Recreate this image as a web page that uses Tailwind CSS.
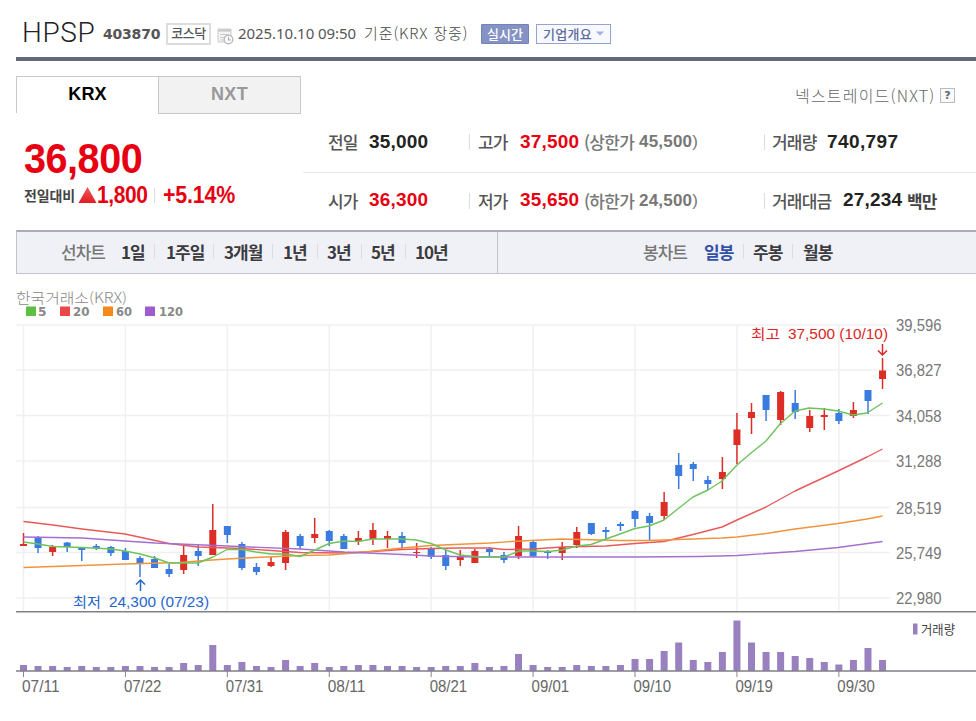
<!DOCTYPE html>
<html lang="ko">
<head>
  <meta charset="UTF-8">
  <meta name="viewport" content="width=device-width, initial-scale=1.0">
  <title>HPSP 403870</title>
  <script src="https://cdn.jsdelivr.net/npm/@tailwindcss/browser@4"></script>
</head>
<body class="w-[976px] h-[721px] overflow-hidden bg-white font-['Liberation_Sans','Noto_Sans_CJK_KR',sans-serif] whitespace-nowrap">
  <!-- Stock title -->
  <header class="ml-4 h-[61px] border-b-4 border-[#646a75] flex items-center pl-[6px] pt-[10px]">
    <h1 class="w-[81px] pb-[2px] text-[28px] leading-7 font-light text-[#222] tracking-[0.6px] font-['Roboto',sans-serif]">HPSP</h1>
    <span class="w-[63px] text-[14px] font-bold text-[#555] font-['DejaVu_Sans',sans-serif] tracking-[-0.2px] pt-0.5">403870</span>
    <span class="w-[45px] h-[22px] border-2 border-[#ddd] text-[13px] leading-[16px] text-center font-medium text-[#555] tracking-[-0.5px] font-['Noto_Sans_CJK_KR',sans-serif]">코스닥</span>
    <svg class="ml-[6px] mt-[5px] w-[17px] h-[17px]" viewBox="0 0 17 17" fill="none">
      <path d="M1 1h13v13H1z" fill="#f4f4f4" stroke="#ccc"/>
      <path d="M1 2.5h13" stroke="#c4c4c4" stroke-width="2"/>
      <path d="M3 6.5h9M3 9.5h5M3 12h4" stroke="#ccc"/>
      <circle cx="11.5" cy="11.5" r="4.3" fill="#fff" stroke="#bbb" stroke-width="1.4"/>
      <path d="M11.5 9v3H14" stroke="#aaa" stroke-width="1.2"/>
    </svg>
    <span class="ml-1 w-[126px] text-[15px] text-[#555] font-['Noto_Sans',sans-serif] tracking-[-0.05px]">2025.10.10 09:50</span>
    <span class="w-[117px] text-[15px] font-light text-[#444] font-['Noto_Sans_CJK_KR',sans-serif] tracking-[0.9px]">기준(KRX 장중)</span>
    <span class="w-[48px] h-5 bg-[#8493c4] border border-[#7283b8] rounded-[1px] text-[13px] leading-[17px] text-center font-medium text-white font-['Noto_Sans_CJK_KR',sans-serif]">실시간</span>
    <span class="ml-[7px] w-[75px] h-5 border border-[#96a3cf] bg-[#f7f9fe] text-[13px] leading-[17px] flex items-center pl-[6px] font-medium text-[#5c6c9c] tracking-[0.3px] font-['Noto_Sans_CJK_KR',sans-serif]">기업개요
      <svg class="ml-1 w-[8px] h-[5px]" viewBox="0 0 8 5"><path d="M0 .5h8L4 4.5z" fill="#9fb0e0"/></svg>
    </span>
  </header>

  <!-- Exchange tabs -->
  <div class="ml-4 mt-[15px] h-[38px] flex">
    <div class="w-[142px] h-[37px] border-t border-l border-[#c8c8c8] text-center text-[18px] leading-[34px] font-bold text-black tracking-[0.2px]">KRX</div>
    <div class="w-[143px] h-[38px] border border-[#c8c8c8] bg-[#f2f2f2] text-center text-[18px] leading-[34px] font-bold text-[#999] tracking-[0.3px]">NXT</div>
    <div class="ml-auto mr-[21px] flex items-center text-[16px] font-light text-[#666] font-['Noto_Sans_CJK_KR',sans-serif]">
      <span class="w-[145px] tracking-[1.2px]">넥스트레이드(NXT)</span>
      <span class="w-[15px] h-[15px] border border-[#bbb] bg-[#fafafa] text-[11px] leading-[13px] text-center font-bold text-[#567] font-['DejaVu_Sans',sans-serif]">?</span>
    </div>
  </div>

  <!-- Price summary -->
  <div class="flex h-[116px]">
    <div class="w-[303px] pl-6 pt-[20px]">
      <div class="text-[43px] leading-[49px] font-bold text-[#e60012] tracking-[-0.5px] scale-x-[0.92] origin-left">36,800</div>
      <div class="flex items-center h-7 mt-[-2px]">
        <span class="w-[54px] text-[14px] font-bold text-[#444] tracking-[-0.1px] font-['Noto_Sans_CJK_KR',sans-serif]">전일대비</span>
        <svg class="w-[19px] h-[18px] mt-[-1px]" viewBox="0 0 19 18">
          <defs><linearGradient id="up" x2="0" y2="1"><stop stop-color="#ee5a58"/><stop offset="1" stop-color="#e21b22"/></linearGradient></defs>
          <path d="M9.5 1L18.5 17H.5z" fill="url(#up)"/>
        </svg>
        <span class="w-[57px] text-[23px] font-bold text-[#e60012] tracking-[-0.4px] scale-x-[0.91] origin-left">1,800</span>
        <i class="w-px h-[15px] bg-[#ddd]"></i>
        <span class="ml-2 text-[23px] font-bold text-[#e60012] tracking-[-0.2px] scale-x-[0.93] origin-left">+5.14%</span>
      </div>
    </div>
    <div class="grow text-[19px] font-bold text-[#222] tracking-[0.2px]">
      <div class="flex items-center h-[59px] border-b border-[#e8e8e8] pl-[25px] pb-[2px]">
        <span class="w-[41px] text-[17px] font-medium text-[#555] tracking-[-0.8px] font-['Noto_Sans_CJK_KR',sans-serif]">전일</span>
        <span class="w-[100px]">35,000</span>
        <i class="w-px h-4 bg-[#ddd]"></i>
        <span class="ml-2 w-[42px] text-[17px] font-medium text-[#555] tracking-[-0.8px] font-['Noto_Sans_CJK_KR',sans-serif]">고가</span>
        <span class="w-[64px] text-[#e60012]">37,500</span>
        <span class="w-[55px] text-[17px] font-medium text-[#777] tracking-[-0.7px] font-['Noto_Sans_CJK_KR',sans-serif]">(상한가</span>
        <span class="w-[125px] text-[17px] text-[#777]">45,500<span class="font-normal">)</span></span>
        <i class="w-px h-4 bg-[#ddd]"></i>
        <span class="ml-[7px] w-[55px] text-[17px] font-medium text-[#555] tracking-[-0.8px] font-['Noto_Sans_CJK_KR',sans-serif]">거래량</span>
        <span class="tracking-[0.4px]">740,797</span>
      </div>
      <div class="flex items-center h-[57px] pl-[25px] pb-[2px]">
        <span class="w-[41px] text-[17px] font-medium text-[#555] tracking-[-0.8px] font-['Noto_Sans_CJK_KR',sans-serif]">시가</span>
        <span class="w-[100px] text-[#e60012]">36,300</span>
        <i class="w-px h-4 bg-[#ddd]"></i>
        <span class="ml-2 w-[42px] text-[17px] font-medium text-[#555] tracking-[-0.8px] font-['Noto_Sans_CJK_KR',sans-serif]">저가</span>
        <span class="w-[64px] text-[#e60012]">35,650</span>
        <span class="w-[55px] text-[17px] font-medium text-[#777] tracking-[-0.7px] font-['Noto_Sans_CJK_KR',sans-serif]">(하한가</span>
        <span class="w-[125px] text-[17px] text-[#777]">24,500<span class="font-normal">)</span></span>
        <i class="w-px h-4 bg-[#ddd]"></i>
        <span class="ml-[7px] w-[71px] text-[17px] font-medium text-[#555] tracking-[-0.8px] font-['Noto_Sans_CJK_KR',sans-serif]">거래대금</span>
        <span class="w-[64px]">27,234</span>
        <span class="text-[17px] tracking-[-0.8px] text-[#444] font-['Noto_Sans_CJK_KR',sans-serif]">백만</span>
      </div>
    </div>
  </div>

  <!-- Chart period bar -->
  <nav class="ml-4 h-[44px] border-t-2 border-b border-l border-t-[#abacb8] border-b-[#c3c4cb] border-l-[#c3c4cb] bg-[#f0f1f6] flex items-center text-[17px] font-bold text-[#3c3c40] tracking-[-1px] font-['Noto_Sans_CJK_KR',sans-serif]">
    <div class="w-[481px] h-full border-r border-[#c3c4cb] flex items-center pl-[44px] pb-[2px]">
      <span class="w-[60px] font-medium text-[#777]">선차트</span>
      <span class="w-[33px]">1일</span><i class="w-px h-[15px] bg-[#ddd]"></i>
      <span class="ml-[11px] w-[47px]">1주일</span><i class="w-px h-[15px] bg-[#ddd]"></i>
      <span class="ml-[10px] w-[48px]">3개월</span><i class="w-px h-[15px] bg-[#ddd]"></i>
      <span class="ml-[10px] w-[34px]">1년</span><i class="w-px h-[15px] bg-[#ddd]"></i>
      <span class="ml-[9px] w-[34px]">3년</span><i class="w-px h-[15px] bg-[#ddd]"></i>
      <span class="ml-[9px] w-[34px]">5년</span><i class="w-px h-[15px] bg-[#ddd]"></i>
      <span class="ml-[9px]">10년</span>
    </div>
    <div class="flex items-center pl-[145px] pb-[2px]">
      <span class="w-[61px] font-medium text-[#777]">봉차트</span>
      <span class="w-[39px] text-[#3350a8]">일봉</span><i class="w-px h-[15px] bg-[#ddd]"></i>
      <span class="ml-[9px] w-[39px]">주봉</span><i class="w-px h-[15px] bg-[#ddd]"></i>
      <span class="ml-[10px]">월봉</span>
    </div>
  </nav>

  <!-- Candle chart, drawn below -->
  <svg id="chart" class="block w-[976px] h-[447px]" viewBox="0 274 976 447"></svg>

  <script>
    const chart = document.getElementById('chart');
    const RED = '#dc2d27', BLUE = '#3a7be0';
    const GULIM = "'Liberation Sans','Noto Sans CJK KR',sans-serif";
    const KR = "'Noto Sans CJK KR',sans-serif";
    const xAt = (i) => 23.5 + i * 14.56;

    // colour, high, body top, body bottom, low, top of volume bar
    const days = [
      ['R',533,544,546,546,665], ['B',536,537,548,553,666], ['R',545,547,552,556,666], ['B',542,542.5,547,552,667],
      ['B',547,547,550,561,666], ['B',544,546,548,550,667], ['B',546,547,553,556,667], ['B',548,551,560,560,666],
      ['B',556,558,564,577,666], ['B',556,559,568,568,667], ['B',564,569,574,577,667], ['R',546,555,570,574,663],
      ['B',545,551,556,566,665], ['R',504,530,555,555,645], ['B',526,526,535,543,665], ['B',542,544,568,570,662],
      ['B',563,567,572,575,666], ['R',557,562,566,567,667], ['R',530,532,563,570,660], ['B',534,536,546,549,666],
      ['R',518,534,538,543,663], ['B',530,531,541,546,667], ['B',534,536,549,549,666], ['R',531,538,541,545,665],
      ['R',523,530,539,545,665], ['R',531,536,539,548,666], ['B',532,536,543,549,666], ['R',543,552,553,558,667],
      ['B',547,549,557,559,667], ['B',550,555,566,570,666], ['R',550,556,560,566,666], ['R',549,551,563,563,663],
      ['B',547,549,552,557,667], ['B',552,555,560,563,666], ['R',526,536,556,559,654], ['B',540,542,556.5,557,665],
      ['B',550,551,553,559,667], ['R',542,547,553,560,667], ['R',527,532,545,548,665], ['B',523,523,534,535,666],
      ['B',527,530,532,540,666], ['B',522,524,526,531,665], ['B',510,511,519,527,659], ['B',513,516,523,541,659],
      ['R',492,502,516,520,651], ['B',453,465,476,489,642.5], ['B',462,464,469,481,660], ['B',476,480,484,490,662],
      ['R',457,472,479,489,652], ['R',413,429.5,445,464,620.5], ['R',403,412,418,434,642.5], ['B',395,395,410,421,652],
      ['R',391,392,420,425,652], ['B',390,403,412,419,656], ['R',410,416,428,432,658], ['R',408,415,417,430,662],
      ['B',409,413,421,424,664.5], ['R',402,410,416,418,660], ['B',390,390,401,414,648], ['R',358,370.5,379,389,660],
    ];

    const averages = [
      ['#e85a5a', '23.5,521.5 53,525 82,529 125,534 169,543.5 198,547 242,548.5 271,550.5 300,552.5 344,553 373,551.5 402,549.5 431,548.5 460,548 490,548 504,549.5 533,549 562,547 606,546 635,543.5 664,541.5 693,534.5 722,527 737,520 766,507 795,491 810,484 838,471 867,457 882.5,449'],
      ['#f0943c', '23.5,567.5 82,565.5 125,564 180,562.5 205,560.5 227,559 256,557.5 300,555.5 329,555 360,552.5 402,548 431,545.5 490,543 520,541 562,539 620,540.5 649,540.5 722,538 737,537 766,533.5 795,529 838,523.5 867,519 882.5,516'],
      ['#a56fd0', '23.5,537 82,538 125,541 155,543 227,546 300,549 344,552 402,554.5 431,556 475,557 635,557 700,556.5 737,555.5 795,551.5 838,547.5 882.5,541.5'],
      ['#6dc45c', '23.5,542 38,544 53,546.5 82,547.5 111,549 125,551 140,554 155,558 169,563 198,563 213,557 227,549.5 242,549.5 256,552 271,554 286,554 300,556.5 315,550 329,543.5 344,541 358,541.5 373,539 402,539 416,540 431,543.5 446,550 460,555 475,556.5 504,557 519,551 533,551 548,551.5 562,550 577,546 591,544.5 606,539 620,534 635,528.5 649,526 664,520 679,508 693,497 708,490 722,481 737,465 751,453 766,441 780,424 795,411 809,408 824,409 838,411 853,415 867,413 882.5,403'],
    ];

    const prices = [['39,596',325], ['36,827',370], ['34,058',415.5], ['31,288',461], ['28,519',507.5], ['25,749',552.5], ['22,980',598]];
    const dates = ['07/11', '07/22', '07/31', '08/11', '08/21', '09/01', '09/10', '09/19', '09/30'];
    const legend = [['#5cc044',26,'5',38,8.5], ['#ea4848',60,'20',73,16.5], ['#f28a1c',103,'60',116,16], ['#a05ccc',145,'120',159,24]];

    const text = (s, x, y, w, size, color, font = GULIM, weight = 400) =>
      `<text x="${x}" y="${y}" textLength="${w}" lengthAdjust="spacingAndGlyphs" font-size="${size}" fill="${color}" font-family="${font}" font-weight="${weight}">${s}</text>`;

    let out = '';
    for (const [label, y] of prices) {
      out += `<path d="M16 ${y}H890" stroke="#f0f0f0" stroke-width="1.5"/>`;
      out += text(label, 896, y + 6, 45.5, 16, '#777');
    }
    dates.forEach((d, i) => {
      const x = xAt(i * 7);
      out += `<path d="M${x} 325V611" stroke="#f0f0f0" stroke-width="1.5"/><path d="M${x} 671V677" stroke="#888"/>`;
      out += text(d, x - 1.5, 692, 37.5, 16, '#666');
    });

    days.forEach(([c, high, top, bottom, low, vol], i) => {
      const x = xAt(i), color = c === 'R' ? RED : BLUE;
      out += `<path d="M${x} ${high}V${low}" stroke="${color}" stroke-width="1.5"/>`;
      out += `<rect x="${x - 3.5}" y="${top}" width="7" height="${bottom - top}" fill="${color}"/>`;
      out += `<rect x="${x - 3.5}" y="${vol}" width="7" height="${671 - vol}" fill="#9981c0"/>`;
    });
    for (const [color, points] of averages) {
      out += `<polyline points="${points}" fill="none" stroke="${color}" stroke-width="1.4" stroke-linejoin="round"/>`;
    }
    out += '<path d="M16 611.8H976M16 671H976" stroke="#808085" stroke-width="1.5"/>';

    out += text('한국거래소(KRX)', 16, 302.5, 111, 14, '#888', KR, 300);
    for (const [color, x, label, tx, w] of legend) {
      out += `<rect x="${x}" y="306.5" width="10" height="9.5" fill="${color}"/>`;
      out += text(label, tx, 315.5, w, 11.5, '#888', "'DejaVu Sans',sans-serif", 700);
    }

    out += text('최고', 751, 339, 29, 14, '#dc2626', KR) + text('37,500 (10/10)', 788, 339, 100, 15.5, '#dc2626');
    out += '<path d="M882.5 344V354M878 350.5L882.5 355L887 350.5" fill="none" stroke="#dc2626" stroke-width="1.5"/>';
    out += text('최저', 73, 606.5, 28, 14, '#2667cc', KR) + text('24,300 (07/23)', 109, 606.5, 100, 15.5, '#2667cc');
    out += '<path d="M140.5 591V580M136 584.5L140.5 580L145 584.5" fill="none" stroke="#2667cc" stroke-width="1.5"/>';

    out += '<rect x="913" y="623.5" width="4.5" height="11" fill="#9981c0"/>';
    out += text('거래량', 921, 634, 34, 13, '#444', KR);
    chart.innerHTML = out;
  </script>
</body>
</html>
